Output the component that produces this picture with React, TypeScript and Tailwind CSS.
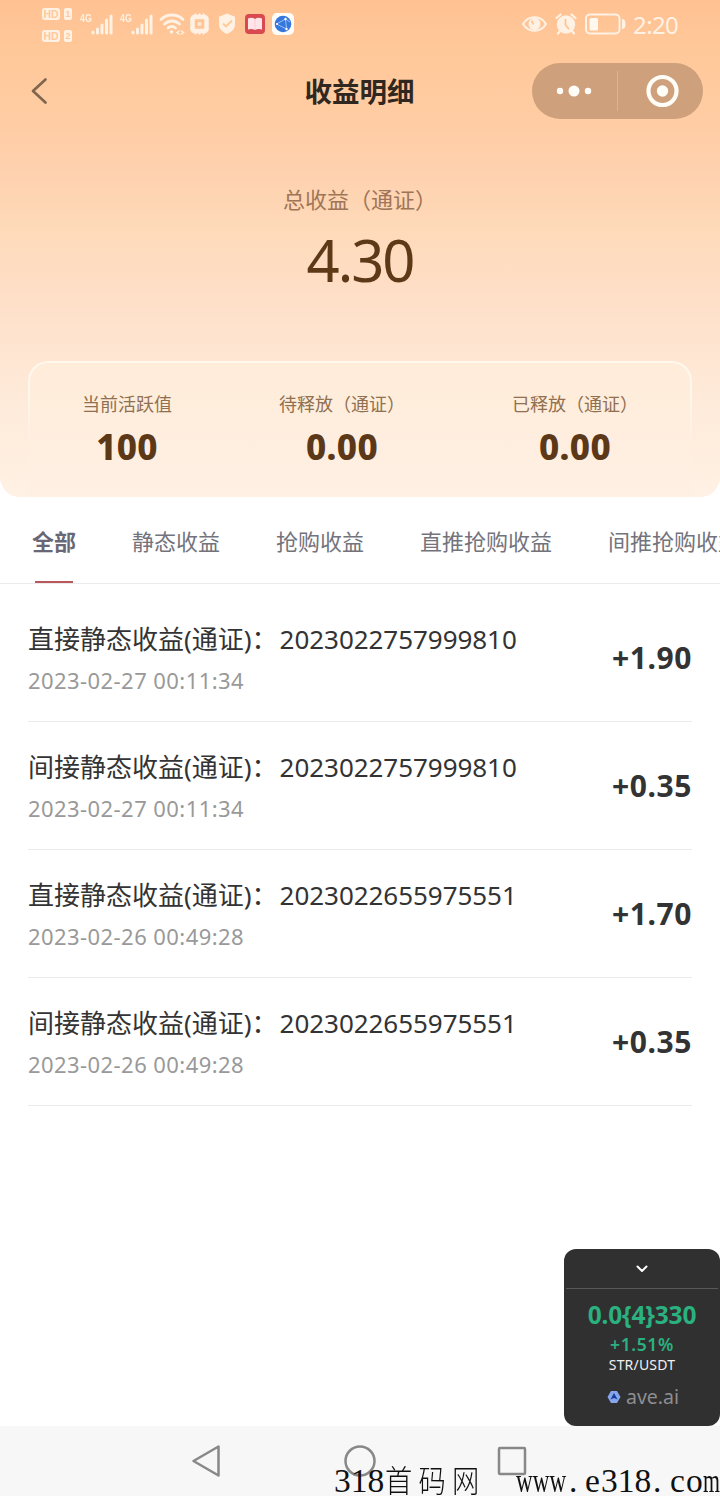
import React from "react";

const stats = [
  { label: "当前活跃值", value: "100", box: "w-[254px]" },
  { label: "待释放（通证）", value: "0.00", box: "w-[176px]" },
  { label: "已释放（通证）", value: "0.00", box: "w-[290px]" },
];

const tabs = ["静态收益", "抢购收益", "直推抢购收益", "间推抢购收益"];

const records = [
  { title: "直接静态收益(通证)：", id: "2023022757999810", time: "2023-02-27 00:11:34", amount: "+1.90" },
  { title: "间接静态收益(通证)：", id: "2023022757999810", time: "2023-02-27 00:11:34", amount: "+0.35" },
  { title: "直接静态收益(通证)：", id: "2023022655975551", time: "2023-02-26 00:49:28", amount: "+1.70" },
  { title: "间接静态收益(通证)：", id: "2023022655975551", time: "2023-02-26 00:49:28", amount: "+0.35" },
];

function SimBadge({ slot }: { slot: string }) {
  return (
    <div className="flex h-[12px] gap-1 font-['Liberation_Sans'] text-[10.500px] font-bold leading-[12px] text-[#ffc999]">
      <span className="w-[18px] rounded-[3px] bg-[#fff2e4] text-center">HD</span>
      <span className="w-[8px] rounded-[2px] bg-[#fff2e4] text-center text-[9px]">{slot}</span>
    </div>
  );
}

function Signal() {
  return (
    <div className="flex h-[22px] w-[34px]">
      <span className="w-[11px] origin-left scale-x-[0.8] font-['Liberation_Sans'] text-[11px] font-bold leading-[11px] text-[#fff2e4]">4G</span>
      <svg className="h-[22px] w-[23px] shrink-0" viewBox="0 0 23 22" stroke="#fff2e4" strokeWidth="3" strokeLinecap="round">
        <path d="M2 20v-1M6.500 20v-4M11 20v-8M15.500 20V7M20 20V3" />
      </svg>
    </div>
  );
}

function StatusBar() {
  return (
    <div className="flex h-[48px] items-start pl-[42px] pr-[41px]">
      <div className="mt-[8px] flex w-[38px] flex-col gap-[10px]">
        <SimBadge slot="1" />
        <SimBadge slot="2" />
      </div>
      <div className="mt-[13px] flex h-[22px]">
        <div className="w-[40px]"><Signal /></div>
        <div className="w-[39px]"><Signal /></div>
        <svg className="h-[22px] w-[26px]" viewBox="0 0 26 22" fill="none" stroke="#fff2e4" strokeWidth="2.800" strokeLinecap="round">
          <path d="M2 6.500C8 .5 18 .5 24 6.500M5.500 11c4.500-4 10.500-4 15 0M9 15c2.500-2 5-2 7.500 0" />
          <circle cx="12.500" cy="19" r="1.800" fill="#fff2e4" stroke="none" />
          <path d="m20 18-2 1.500 2 1.500m2.500-3 2 1.500-2 1.500" strokeWidth="1.500" />
        </svg>
        <svg className="ml-[4px] h-[22px] w-[22px]" viewBox="0 0 22 22" fill="none" stroke="#fff2e4">
          <rect x="3.500" y="4" width="14" height="14" rx="2" strokeWidth="4.500" />
          <path d="M6.500 .5v2M10.500 .5v2M14.500 .5v2M6.500 19.500v2M10.500 19.500v2M14.500 19.500v2" strokeWidth="2" />
          <rect x="8.500" y="9" width="4" height="4" rx="1" fill="#ffe5cc" stroke="none" />
        </svg>
        <svg className="ml-[7px] h-[22px] w-[18px]" viewBox="0 0 18 22">
          <path d="m9 .5 8 3.200v8c0 4.500-4.200 7.500-8 9.200-3.800-1.700-8-4.700-8-9.200v-8z" fill="#fff2e4" />
          <path d="m5 10.500 3 3 6-6" fill="none" stroke="#ffc999" strokeWidth="1.900" />
        </svg>
        <svg className="ml-[9px] mt-px h-[20px] w-[20px]" viewBox="0 0 20 20">
          <rect width="20" height="20" rx="4" fill="#d94a50" />
          <path d="M3 4.500q4-1.500 7 .5 3-2 7-.5v11q-4-1-7 .5-3-1.500-7-.5z" fill="#ffe4ea" />
          <path d="M10 5v10" stroke="#f9cdd6" />
        </svg>
        <svg className="ml-[7px] h-[22px] w-[22px]" viewBox="0 0 22 22">
          <rect width="22" height="22" rx="5" fill="#fffdf9" />
          <circle cx="11" cy="11" r="8.300" fill="#3577dc" />
          <path d="M4.500 11 13.500 6l1 10zM13.500 6 18 9" fill="none" stroke="#9bc1f5" strokeWidth="1" />
          <circle cx="13.500" cy="6" r="1.200" fill="#fff" />
          <circle cx="14.500" cy="16" r="1.200" fill="#fff" />
          <circle cx="5" cy="11" r="1" fill="#fff" />
        </svg>
      </div>
      <div className="ml-auto mt-[12px] flex h-[24px] items-center">
        <svg className="h-[18px] w-[25px]" viewBox="0 0 25 18">
          <path d="M1 9c5.500-9 17.500-9 23 0-5.500 9-17.500 9-23 0z" fill="none" stroke="#fff2e4" strokeWidth="2" />
          <circle cx="12.500" cy="9" r="6" fill="#fff2e4" />
          <path d="M10 5.500a3.200 3.200 0 0 0 2 3.500" fill="none" stroke="#ffc999" strokeWidth="2" />
        </svg>
        <svg className="ml-[8px] h-[22px] w-[22px]" viewBox="0 0 22 22" fill="none" strokeLinecap="round">
          <circle cx="11" cy="11.500" r="9.200" fill="#fff2e4" />
          <path d="m1.500 5 4-3.500M20.500 5l-4-3.500M5 18l-2 2.500M17 18l2 2.500" stroke="#fff2e4" strokeWidth="2.200" />
          <path d="M10.500 6.500V12l3 3.500" stroke="#ffc28d" strokeWidth="1.700" />
        </svg>
        <svg className="ml-[8px] h-[22px] w-[41px]" viewBox="0 0 41 22">
          <rect x="1" y="1.500" width="33.500" height="19" rx="4" fill="none" stroke="#fff2e4" strokeWidth="2" />
          <rect x="4.500" y="5" width="8.500" height="12.500" rx="1.500" fill="#fff8ef" />
          <path d="M37 6q3.500 0 3.500 5T37 16z" fill="#fff2e4" />
        </svg>
        <span className="ml-[7px] mt-[2px] w-[46px] whitespace-nowrap font-['Noto_Sans'] text-[24px] leading-[24px] tracking-[-0.6px] text-[#fff2e4]">2:20</span>
      </div>
    </div>
  );
}

function TitleBar() {
  return (
    <div className="flex h-[86px] items-center justify-between pl-[30px] pr-[17px]">
      <svg className="h-[28px] w-[171px]" viewBox="0 0 171 28" fill="none" stroke="#80664f" strokeWidth="2.700" strokeLinecap="round" strokeLinejoin="round">
        <path d="M15.500 2.500 3 14l12.500 11.500" />
      </svg>
      <h1 className="-mt-[2px] mr-[13px] w-[111px] whitespace-nowrap text-[27.500px] font-bold leading-[40px] text-[#302820]">收益明细</h1>
      <div className="flex h-[56px] w-[171px] items-center rounded-full bg-[#cea17c]">
        <svg className="h-[16px] w-[85px]" viewBox="0 0 85 16" fill="#fffdf8">
          <circle cx="28" cy="8" r="3.200" />
          <circle cx="42" cy="8" r="5.500" />
          <circle cx="56" cy="8" r="3.200" />
        </svg>
        <span className="h-[40px] w-px bg-[#dfb38e]" />
        <svg className="ml-[28px] h-[34px] w-[34px]" viewBox="0 0 34 34">
          <circle cx="16.500" cy="17" r="14" fill="none" stroke="#fffdf8" strokeWidth="4.200" />
          <circle cx="16.500" cy="17" r="5.700" fill="#fffdf8" />
        </svg>
      </div>
    </div>
  );
}

function Summary() {
  return (
    <header className="flex h-[497px] flex-col rounded-b-[20px] bg-[linear-gradient(180deg,#ffc192_0%,#ffc899_10%,#ffcda5_26%,#fed2b0_36%,#fedab9_46%,#fedec6_58%,#fee4cf_68%,#feead9_80%,#fff1e4_100%)]">
      <StatusBar />
      <TitleBar />
      <div className="mt-[49px] flex flex-col items-center">
        <p className="text-[22px] leading-[30px] text-[#a07557]">总收益（通证）</p>
        <p className="mt-[11px] font-['Noto_Sans'] text-[58px] leading-[72px] tracking-[-2px] text-[#5e3918]">4.30</p>
      </div>
      <section className="relative mx-[28px] mt-auto h-[136px] rounded-t-[20px] bg-[linear-gradient(180deg,#ffecd9,#fff0e4)]">
        <div className="absolute inset-x-0 top-0 h-[88px] rounded-t-[20px] border-x-2 border-t-2 border-[#fff8ef] [mask-image:linear-gradient(#000_30%,transparent)]" />
        <div className="-mx-[28px] flex pt-[29px]">
          {stats.map((item) => (
            <div key={item.label} className={"flex shrink-0 flex-col items-center " + item.box}>
              <p className="whitespace-nowrap text-[18px] leading-[26px] text-[#90704f]">{item.label}</p>
              <p className="mt-[9px] font-['Noto_Sans'] text-[35px] font-extrabold leading-[44px] tracking-[0.300px] text-[#5b3818]">{item.value}</p>
            </div>
          ))}
        </div>
      </section>
    </header>
  );
}

function Tabs() {
  return (
    <nav className="flex h-[87px] gap-[56px] overflow-hidden whitespace-nowrap border-b border-[#ebebed] pl-[32px] text-[22px] leading-[30px] text-[#73737c]">
      <div className="flex w-[44px] shrink-0 flex-col items-center justify-between pt-[28px] font-bold text-[#696775]">
        <span>全部</span>
        <span className="h-[2px] w-[38px] bg-[#b9575b]" />
      </div>
      {tabs.map((tab) => (
        <span key={tab} className="shrink-0 pt-[28px]">{tab}</span>
      ))}
    </nav>
  );
}

function PriceWidget() {
  return (
    <aside className="absolute left-[564px] top-[1249px] flex h-[177px] w-[156px] flex-col items-center rounded-[12px] bg-[#303031] font-['Noto_Sans']">
      <div className="flex h-[40px] w-[152px] items-center justify-center border-b border-[#595959]">
        <svg className="h-[8px] w-[12px]" viewBox="0 0 12 8" fill="none" stroke="#fff" strokeWidth="2" strokeLinecap="round" strokeLinejoin="round">
          <path d="m1.500 1.500 4.500 4.500 4.500-4.500" />
        </svg>
      </div>
      <p className="mt-[10px] text-[24.500px] font-bold leading-[32px] tracking-[-0.2px] text-[#2bb17f]">0.0{"{4}"}330</p>
      <p className="mt-px text-[17.500px] font-semibold leading-[24px] tracking-[0.600px] text-[#2bb17f]">+1.51%</p>
      <p className="text-[14px] leading-[18px] tracking-[0.200px] text-[#f0f0f0]">STR/USDT</p>
      <div className="mt-[10px] flex items-center gap-[5px] text-[19.500px] leading-[26px] text-[#8e8e90]">
        <svg className="ml-[2px] h-[14px] w-[14px]" viewBox="0 0 14 14">
          <path d="M4 1h6l3.500 6-3.500 6H4L.5 7z" fill="#86a5ec" />
          <path d="M7 3 10.500 9.500 7 8 3.500 9.500z" fill="#173d9a" />
        </svg>
        <span>ave.ai</span>
      </div>
    </aside>
  );
}

function SiteMark() {
  return (
    <div className="absolute left-[334px] top-[1456px] flex h-[40px] w-[386px] whitespace-nowrap font-['Liberation_Serif'] text-[33.500px] leading-[50px] text-[#101010]">
      <span className="w-[51px]">318</span>
      <span className="w-[131px] origin-left scale-x-[0.88] font-['Noto_Sans_CJK_SC'] text-[31px] font-light leading-[46px] tracking-[7px]">首码网</span>
      <span className="w-[51px] origin-left scale-x-[0.69]">www</span>
      <span className="w-[17px] pl-[2px]">.</span>
      <span className="w-[17px] pl-px">e</span>
      <span className="w-[50px]">318</span>
      <span className="w-[18px] pl-[2px]">.</span>
      <span className="w-[17px] pl-px">c</span>
      <span className="w-[17px]">o</span>
      <span className="w-[17px] origin-left scale-x-[0.65]">m</span>
    </div>
  );
}

export default function App() {
  return (
    <div className="relative flex h-[1496px] w-[720px] flex-col overflow-hidden bg-white font-['Noto_Sans_CJK_SC',sans-serif]">
      <Summary />
      <Tabs />
      <main className="flex flex-col px-[28px] pt-[10px]">
        {records.map((row) => (
          <article key={row.title + row.id} className="flex h-[128px] items-center justify-between border-b border-[#ececec]">
            <div>
              <p className="whitespace-nowrap font-['Noto_Sans','Noto_Sans_CJK_SC'] text-[26px] leading-[40px] text-[#333333]">
                {row.title}<span className="ml-[2px] tracking-[-0.050px]">{row.id}</span>
              </p>
              <p className="mt-[4px] font-['Noto_Sans'] text-[22px] leading-[34px] tracking-[0.430px] text-[#999999]">{row.time}</p>
            </div>
            <span className="mt-px font-['Noto_Sans'] text-[30px] font-bold leading-[40px] tracking-[0.600px] text-[#333333]">{row.amount}</span>
          </article>
        ))}
      </main>
      <footer className="mt-auto flex h-[70px] bg-[#f7f7f7] pl-[191px] pt-[17px]">
        <svg className="h-[36px] w-[336px]" viewBox="0 0 336 36" fill="none" stroke="#888" strokeWidth="2.500" strokeLinejoin="round">
          <path d="M27.500 3.500v29L2.500 18z" />
          <circle cx="169" cy="18" r="14.500" />
          <rect x="308" y="5" width="26" height="26" rx="1" />
        </svg>
      </footer>
      <PriceWidget />
      <SiteMark />
    </div>
  );
}
